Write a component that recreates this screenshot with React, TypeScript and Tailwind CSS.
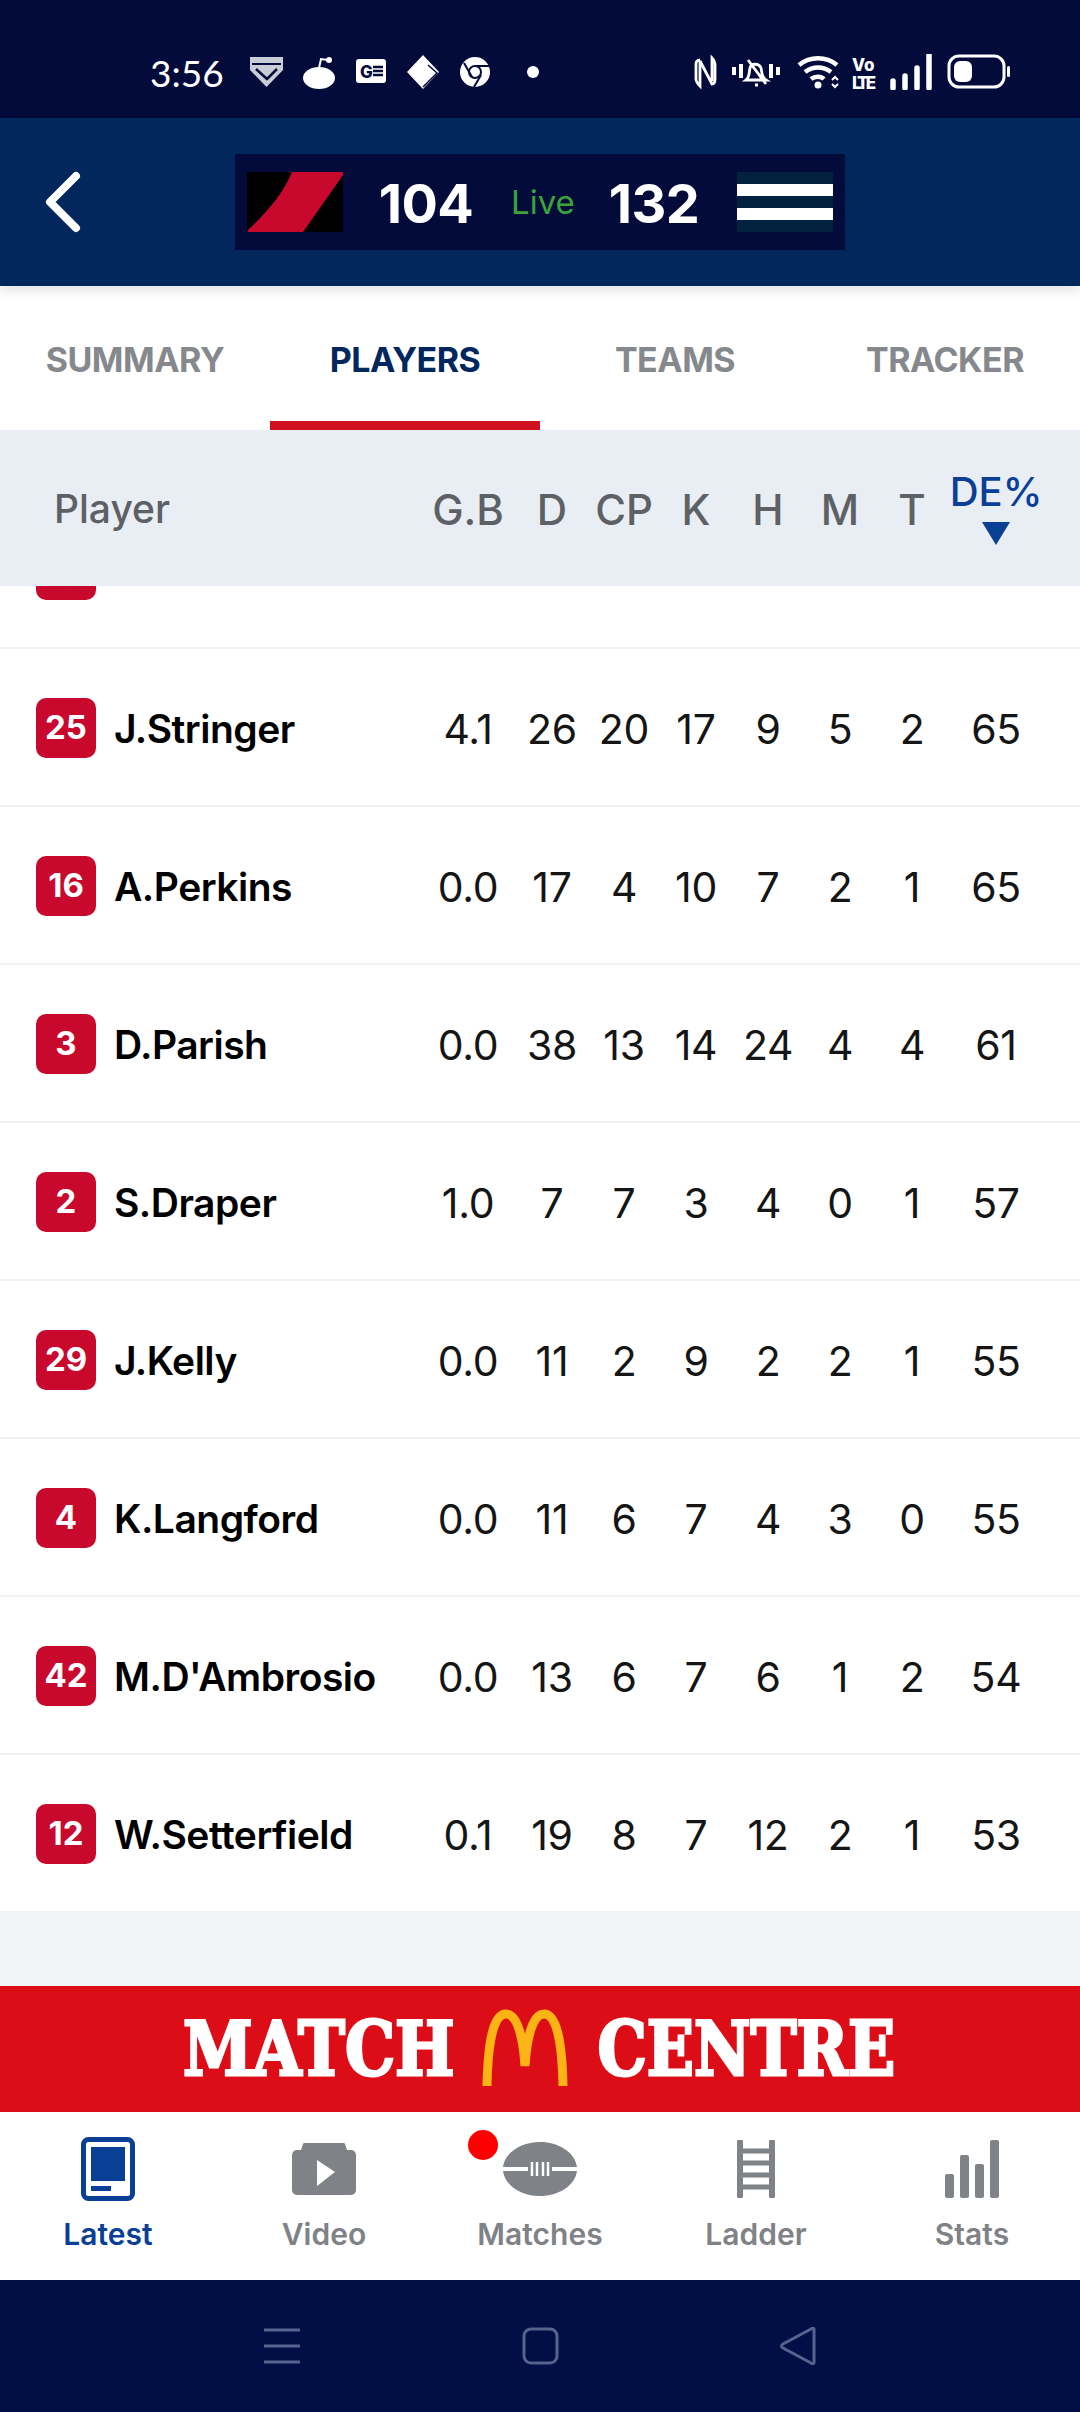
const rows = [
  { no: 25, name: "J.Stringer", stats: ["4.1", "26", "20", "17", "9", "5", "2", "65"] },
  { no: 16, name: "A.Perkins", stats: ["0.0", "17", "4", "10", "7", "2", "1", "65"] },
  { no: 3, name: "D.Parish", stats: ["0.0", "38", "13", "14", "24", "4", "4", "61"] },
  { no: 2, name: "S.Draper", stats: ["1.0", "7", "7", "3", "4", "0", "1", "57"] },
  { no: 29, name: "J.Kelly", stats: ["0.0", "11", "2", "9", "2", "2", "1", "55"] },
  { no: 4, name: "K.Langford", stats: ["0.0", "11", "6", "7", "4", "3", "0", "55"] },
  { no: 42, name: "M.D'Ambrosio", stats: ["0.0", "13", "6", "7", "6", "1", "2", "54"] },
  { no: 12, name: "W.Setterfield", stats: ["0.1", "19", "8", "7", "12", "2", "1", "53"] },
];

const columns = ["G.B", "D", "CP", "K", "H", "M", "T"];
const tableGrid = "grid grid-cols-[420px_96px_repeat(6,72px)_96px] items-center";

function Row({ no, name, stats }: { no: number; name: string; stats: string[] }) {
  return (
    <div className={`${tableGrid} h-[158px] border-b-2 border-[#f1f2f3] box-border bg-white pt-[2px]`}>
      <div className="flex items-center pl-[36px]">
        <div className="w-[60px] h-[60px] rounded-[10px] bg-[#c8082d] text-white text-[33px] font-bold flex items-center justify-center">{no}</div>
        <div className="ml-[18px] mt-[3px] text-[39px] font-semibold text-black whitespace-nowrap tracking-[-0.5px]">{name}</div>
      </div>
      {stats.map((s, i) => (
        <div key={i} className="mt-[3px] text-center text-[41px] font-normal text-[#151515] tracking-[-0.3px]">{s}</div>
      ))}
    </div>
  );
}

function StatusBar() {
  return (
    <div className="h-[118px] bg-[#030b3a] flex items-center text-white pt-[26px]">
      <div className="ml-[150px] w-[100px] text-[37px] font-normal font-['Lato',sans-serif] leading-none">3:56</div>
      {/* left notification icons */}
      <svg width="290" height="36" viewBox="0 0 290 36" fill="white">
        <path d="M0 3h33v13L16.500 33 0 16z" fill="#c9cdd8" />
        <path d="M2 10h29" stroke="#030b3a" strokeWidth="2" fill="none" />
        <path d="M6 15l11 10 10-10" stroke="#030b3a" strokeWidth="2.500" fill="none" />
        <ellipse cx="69" cy="24" rx="16" ry="11" />
        <path d="M69 14l2-9 7 1" stroke="white" strokeWidth="2" fill="none" />
        <circle cx="79" cy="6" r="3" />
        <rect x="106" y="5" width="30" height="24" rx="3" />
        <text x="110" y="24" fontSize="17" fontWeight="800" fill="#030b3a" fontFamily="Inter">G</text>
        <path d="M123 13h10M123 17h10M123 21h10" stroke="#030b3a" strokeWidth="2.500" />
        <path d="M173 1l16 17-16 17-16-17z" />
        <path d="M178 11l9 8-14 14" stroke="#030b3a" strokeWidth="1.500" fill="none" />
        <circle cx="225" cy="18" r="15" />
        <circle cx="225" cy="18" r="6" fill="none" stroke="#030b3a" strokeWidth="2" />
        <path d="M214 9l8 14M226 12h13M231 21l-7 12" stroke="#030b3a" strokeWidth="2" fill="none" />
        <circle cx="283" cy="18" r="6" />
      </svg>
      <div className="flex-1" />
      <svg width="325" height="36" viewBox="0 0 325 36" fill="none" stroke="white" className="mr-[61px]">
        <path d="M6 6c-4 0-4 3-4 5v14c0 3 2 5 4 7V7l12 23c2 0 3-2 3-5V10c0-3-1-4-3-6v23" strokeWidth="2.800" />
        <path d="M40 13v8M47 10v14M77 10v14M84 13v8" strokeWidth="4" />
        <path d="M52 26c4-3 3-9 4-12 1-5 9-5 11 0 1 3 0 9 5 12zM54 6l18 24M61 31h3" strokeWidth="2.800" />
        <path d="M105 11c11-9 27-9 38 0M111 18c8-6 18-6 26 0M117 25c4-3 10-3 13 0" strokeWidth="4.500" />
        <circle cx="124" cy="31" r="3.500" fill="white" stroke="none" />
        <path d="M138 26l3-3 3 3M138 30l3 3 3-3" strokeWidth="2" />
        <text x="158" y="17" fontSize="17" fontWeight="800" fill="white" stroke="none" fontFamily="Inter">Vo</text>
        <text x="158" y="35" fontSize="17" fontWeight="800" fill="white" stroke="none" fontFamily="Inter" textLength="24">LTE</text>
        <path d="M199 27v7M211 22v12M223 14v20M235 1v33" strokeWidth="5.500" strokeLinecap="round" />
        <rect x="255" y="2" width="55" height="31" rx="10" strokeWidth="3" />
        <rect x="260" y="7" width="18" height="21" rx="6" fill="white" stroke="none" />
        <rect x="313" y="12" width="3" height="11" rx="1.500" fill="white" stroke="none" />
      </svg>
    </div>
  );
}

function ScoreHeader() {
  return (
    <div className="h-[168px] bg-[#01275c] flex items-center shadow-[0_4px_12px_rgba(0,0,0,0.12)] relative">
      <div className="w-[235px] pl-[41px]">
        <svg width="42" height="62" viewBox="0 0 42 62" fill="none" stroke="white" strokeWidth="8" strokeLinecap="round" strokeLinejoin="round">
          <path d="M35 5L9 31l26 26" />
        </svg>
      </div>
      <div className="w-[610px] h-[96px] bg-[#030b3a] grid grid-cols-[96px_1fr_auto_1fr_96px] items-center px-[12px]">
        <svg width="96" height="60" viewBox="0 0 96 60">
          <rect width="96" height="60" fill="#000" />
          <path d="M45 0H96V3L56 60H2Q0 60 1 58C20 40 36 22 45 0z" fill="#c8082d" />
        </svg>
        <div className="text-center text-white text-[54px] font-bold tracking-[-0.5px] leading-none pt-[4px]">104</div>
        <div className="text-[#3aa33a] text-[33px] leading-none w-[62px] text-center translate-x-[2px]">Live</div>
        <div className="text-center text-white text-[54px] font-bold tracking-[-0.5px] leading-none pt-[4px]">132</div>
        <svg width="96" height="60" viewBox="0 0 96 60">
          <rect width="96" height="60" fill="#02213f" />
          <rect y="12" width="96" height="12" fill="#fff" />
          <rect y="36" width="96" height="12" fill="#fff" />
        </svg>
      </div>
    </div>
  );
}

function Tabs() {
  const tabs = ["SUMMARY", "PLAYERS", "TEAMS", "TRACKER"];
  return (
    <div className="grid grid-cols-4 h-[144px] bg-white">
      {tabs.map((t) => (
        <div key={t} className={`flex items-center justify-center text-[34px] font-bold tracking-[-0.5px] border-b-[9px] pt-[12px] ${t === "PLAYERS" ? "text-[#01275c] border-[#d0121f]" : "text-[#85888c] border-transparent"}`}>
          {t}
        </div>
      ))}
    </div>
  );
}

function TableHeader() {
  return (
    <div className={`${tableGrid} h-[156px] bg-[#e9edf4] text-[42px] font-medium text-[#5d6064] pt-[2px]`}>
      <div className="pl-[54px] text-[39px]">Player</div>
      {columns.map((c) => (
        <div key={c} className="text-center">{c}</div>
      ))}
      <div className="flex flex-col items-center text-[#0a3f96] text-[40px] leading-none -mt-[2px]">
        <span>DE%</span>
        <svg width="28" height="23" viewBox="0 0 28 23" className="mt-[10px]" fill="#0a3f96">
          <path d="M0 0h28L14 23z" />
        </svg>
      </div>
    </div>
  );
}

function Banner() {
  return (
    <div className="h-[126px] bg-[#dc0d17] flex items-center justify-center overflow-hidden">
      <div className="w-[266px] flex justify-center">
        <span className="text-white text-[75px] font-bold font-['DejaVu_Serif',serif] leading-none scale-x-[0.84] whitespace-nowrap [-webkit-text-stroke:3px_white]">MATCH</span>
      </div>
      <svg width="86" height="77" viewBox="0 0 86 77" fill="none" stroke="#fbb316" strokeWidth="9" className="mx-[30px] -mt-[3px]">
        <path d="M5 77C6 30 12 5 24 5c11 0 17 22 19 52 2-30 8-52 19-52 12 0 18 25 19 72" />
      </svg>
      <div className="w-[296px] flex justify-center">
        <span className="text-white text-[75px] font-bold font-['DejaVu_Serif',serif] leading-none scale-x-[0.825] whitespace-nowrap [-webkit-text-stroke:3px_white]">CENTRE</span>
      </div>
    </div>
  );
}

function NavItem({ label, active, children }: { label: string; active?: boolean; children: React.ReactNode }) {
  return (
    <div className="flex flex-col items-center">
      <div className="h-[78px] flex items-center justify-center relative">{children}</div>
      <div className={`mt-[8px] text-[30px] font-semibold leading-[36px] ${active ? "text-[#0a3f96]" : "text-[#7f8286]"}`}>{label}</div>
    </div>
  );
}

function BottomNav() {
  return (
    <div className="h-[168px] bg-white grid grid-cols-5 pt-[18px]">
      <NavItem label="Latest" active>
        <svg width="54" height="64" viewBox="0 0 54 64">
          <rect x="2.500" y="2.500" width="49" height="59" rx="5" fill="none" stroke="#0a3f96" strokeWidth="5" />
          <rect x="10" y="10" width="34" height="34" fill="#0a3f96" />
          <rect x="10" y="49" width="20" height="5" fill="#0a3f96" />
        </svg>
      </NavItem>
      <NavItem label="Video">
        <svg width="64" height="52" viewBox="0 0 64 52">
          <path d="M9 7l2-6c0-1 1-1 2-1h38c1 0 2 0 2 1l2 6z" fill="#7f8286" />
          <rect y="7" width="64" height="45" rx="5" fill="#7f8286" />
          <path d="M25 17l18 12-18 14z" fill="#fff" />
        </svg>
      </NavItem>
      <NavItem label="Matches">
        <svg width="74" height="54" viewBox="0 0 74 54">
          <path d="M0 25C2 10 19 0 37 0s35 10 37 25zM0 29c2 15 19 25 37 25s35-10 37-25z" fill="#7f8286" />
          <rect x="25" y="20" width="24" height="14" fill="#7f8286" />
          <path d="M29 20v14M34 20v14M40 20v14M45 20v14" stroke="#fff" strokeWidth="2.500" />
        </svg>
        <div className="absolute left-[-35px] top-[0px] w-[30px] h-[30px] rounded-full bg-[#fe0000]" />
      </NavItem>
      <NavItem label="Ladder">
        <svg width="38" height="58" viewBox="0 0 38 58" fill="none" stroke="#7f8286">
          <path d="M3 2v54M35 2v54" strokeWidth="6" strokeLinecap="round" />
          <path d="M3 11h32M3 23h32M3 35h32M3 47h32" strokeWidth="5" />
        </svg>
      </NavItem>
      <NavItem label="Stats">
        <svg width="54" height="58" viewBox="0 0 54 58" fill="#7f8286">
          <rect x="0" y="34" width="9" height="24" rx="2" />
          <rect x="15" y="15" width="9" height="43" rx="2" />
          <rect x="30" y="24" width="9" height="34" rx="2" />
          <rect x="45" y="0" width="9" height="58" rx="2" />
        </svg>
      </NavItem>
    </div>
  );
}

function SystemNav() {
  return (
    <div className="h-[132px] bg-[#001047] flex items-center">
      <svg width="1080" height="38" viewBox="0 0 1080 38" fill="none" stroke="#55638f" strokeWidth="3">
        <path d="M264 3h36M264 19h36M264 35h36" />
        <rect x="524" y="2" width="33" height="34" rx="7" />
        <path d="M814 2v34c-1 1-2 1-3 0L783 21c-2-1-2-3 0-4L811 2c1-1 3-1 3 0z" strokeLinejoin="round" />
      </svg>
    </div>
  );
}

export default function App() {
  return (
    <div className="w-[1080px] h-[2412px] overflow-hidden flex flex-col bg-white font-['Inter',sans-serif]">
      <StatusBar />
      <ScoreHeader />
      <Tabs />
      <TableHeader />
      {/* list is scrolled, top row is cut by the header */}
      <div className="h-[63px] overflow-hidden shrink-0">
        <div className="-mt-[95px]">
          <Row no={10} name="Z.Merrett" stats={["0.0", "7", "7", "7", "", "7", "", "7"]} />
        </div>
      </div>
      {rows.map((r) => (
        <Row key={r.no} {...r} />
      ))}
      <div className="h-[74px] bg-[#f2f3f6] -mt-[1px]" />
      <Banner />
      <BottomNav />
      <SystemNav />
    </div>
  );
}
